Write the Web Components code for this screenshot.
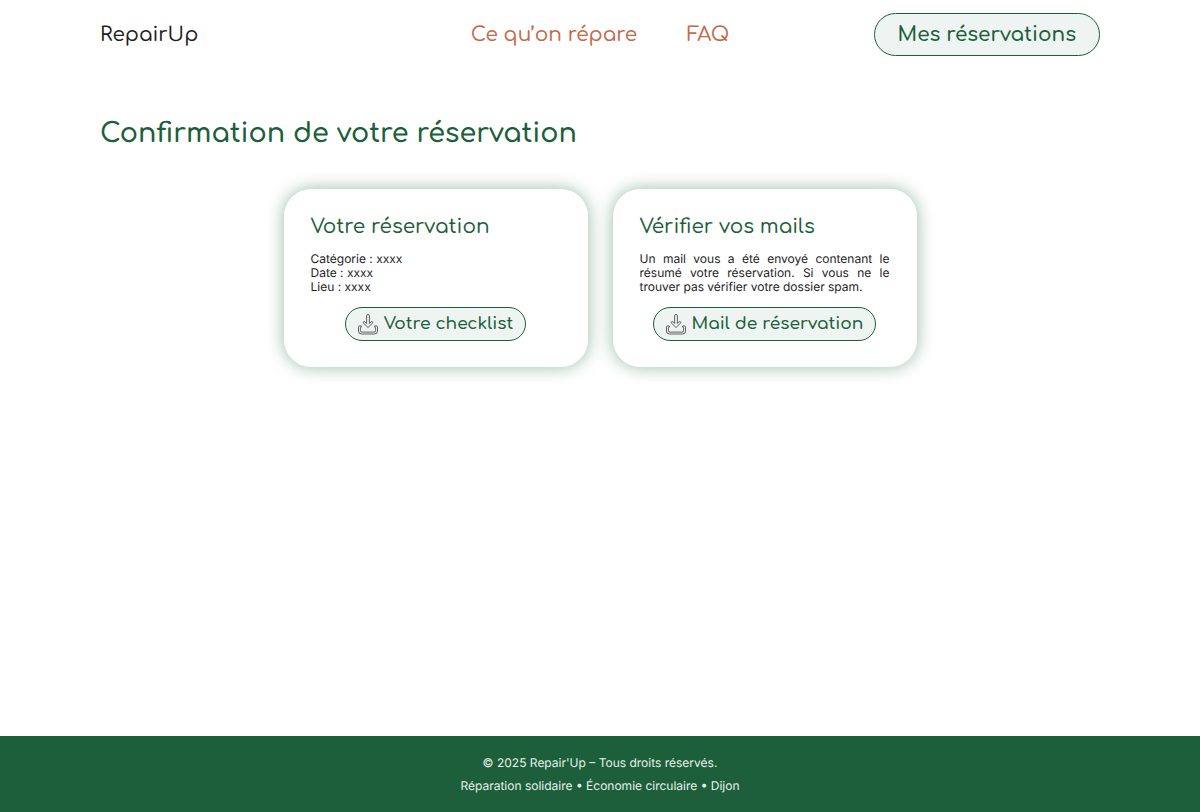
<!DOCTYPE html>
<html lang="fr">
<head>
<meta charset="utf-8">
<meta name="viewport" content="width=device-width, initial-scale=1">
<title>RepairUp - Confirmation</title>
<style>
    :root {
        --green: #1c5f3a;
        --green-light: #eef4f1;
        --orange: #c5694a;
        --title-font: Comfortaa, Quicksand, Lato, sans-serif;
    }
    body {
        margin: 0;
        min-height: 100vh;
        display: flex;
        flex-direction: column;
        background: #fff;
        color: #1e1e1e;
        font-family: Inter, sans-serif;
        font-size: 12px;
        line-height: 14px;
        text-rendering: geometricPrecision;
    }
    main {
        flex: 1;
        padding: 62px 100px 40px;
    }
    h1 {
        margin: 0 0 38px;
        color: var(--green);
        font: 600 27px/33px var(--title-font);
    }
    .cards {
        display: flex;
        flex-wrap: wrap;
        justify-content: center;
        gap: 25px;
    }
    p {
        margin: 0;
    }
</style>
</head>
<body>
<site-header></site-header>
<main>
    <h1>Confirmation de votre réservation</h1>
    <div class="cards">
        <info-card>
            <span slot="title">Votre réservation</span>
            <p>Catégorie : xxxx<br>Date : xxxx<br>Lieu : xxxx</p>
            <download-button slot="action">Votre checklist</download-button>
        </info-card>
        <info-card>
            <span slot="title">Vérifier vos mails</span>
            <p>Un mail vous a été envoyé contenant le résumé votre réservation. Si vous ne le trouver pas vérifier votre dossier spam.</p>
            <download-button slot="action">Mail de réservation</download-button>
        </info-card>
    </div>
</main>
<site-footer></site-footer>

<script>
class SiteHeader extends HTMLElement {
    constructor() {
        super();
        this.root = this.attachShadow({ mode: "open" });
    }
    connectedCallback() {
        this.root.innerHTML = `
        <style>
            :host {
                display: block;
                padding: 13px 100px 0;
                font: 500 20px/27px var(--title-font);
            }
            header {
                display: grid;
                grid-template-columns: 1fr auto 1fr;
                align-items: center;
            }
            a { text-decoration: none; color: inherit; }
            nav {
                display: flex;
                gap: 50px;
                color: var(--orange);
            }
            button {
                justify-self: end;
                padding: 7px 23px;
                border: 1px solid var(--green);
                border-radius: 22px;
                background: var(--green-light);
                color: var(--green);
                font: inherit;
                font-weight: 600;
                cursor: pointer;
            }
        </style>
        <header>
            <a href="#">RepairUp</a>
            <nav>
                <a href="#repare">Ce qu’on répare</a>
                <a href="#faq">FAQ</a>
            </nav>
            <button type="button">Mes réservations</button>
        </header>`;
    }
}

class InfoCard extends HTMLElement {
    constructor() {
        super();
        this.root = this.attachShadow({ mode: "open" });
    }
    connectedCallback() {
        this.root.innerHTML = `
        <style>
            :host {
                display: flex;
                flex-direction: column;
                box-sizing: border-box;
                width: 304px;
                padding: 24px 27px 26px;
                border-radius: 27px;
                background: #fff;
                box-shadow: 0 0 17px rgba(28, 105, 62, 0.45);
            }
            h2 {
                margin: 0 0 12px;
                color: var(--green);
                font: 500 20px/27px var(--title-font);
            }
            .text { text-align: justify; }
            .action {
                display: flex;
                justify-content: center;
                margin-top: 13px;
            }
        </style>
        <h2><slot name="title"></slot></h2>
        <div class="text"><slot></slot></div>
        <div class="action"><slot name="action"></slot></div>`;
    }
}

class DownloadButton extends HTMLElement {
    constructor() {
        super();
        this.root = this.attachShadow({ mode: "open" });
    }
    connectedCallback() {
        this.root.innerHTML = `
        <style>
            :host { display: inline-flex; }
            button {
                display: flex;
                align-items: center;
                gap: 6px;
                padding: 5px 12px;
                border: 1px solid var(--green);
                border-radius: 17px;
                background: var(--green-light);
                color: var(--green);
                font: 600 17px/22px var(--title-font);
                cursor: pointer;
            }
        </style>
        <button type="button">
            <svg width="20" height="22" viewBox="0 0 20 22" fill="none" stroke="#222" stroke-width=".7" stroke-linejoin="round" aria-hidden="true">
                <path d="M8.6 2.7Q8.6 1.5 10 1.5T11.4 2.7V10.5l1.7-1.7q.8-.7 1.4 0t0 1.4L10 14.5 5.5 10.2q-.6-.8 0-1.4t1.4 0L8.6 10.5Z"/>
                <path d="M3.3 12.9H1.7Q.5 12.9.5 14.1V18Q.5 21 3.5 21H16.5Q19.5 21 19.5 18V14.1Q19.5 12.9 18.3 12.9H16.7V14.2Q17.6 14.2 17.6 15V17.5Q17.6 19.1 16 19.1H4Q2.4 19.1 2.4 17.5V15Q2.4 14.2 3.3 14.2Z"/>
            </svg>
            <slot></slot>
        </button>`;
    }
}

class SiteFooter extends HTMLElement {
    constructor() {
        super();
        this.root = this.attachShadow({ mode: "open" });
    }
    connectedCallback() {
        this.root.innerHTML = `
        <style>
            :host {
                display: block;
                padding: 20px 20px 19px;
                background: var(--green);
                color: #e8f1ec;
                text-align: center;
            }
            p { margin: 0; }
            p + p { margin-top: 9px; }
        </style>
        <footer>
            <p>© 2025 Repair'Up – Tous droits réservés.</p>
            <p>Réparation solidaire • Économie circulaire • Dijon</p>
        </footer>`;
    }
}

customElements.define("site-header", SiteHeader);
customElements.define("info-card", InfoCard);
customElements.define("download-button", DownloadButton);
customElements.define("site-footer", SiteFooter);
</script>
</body>
</html>
